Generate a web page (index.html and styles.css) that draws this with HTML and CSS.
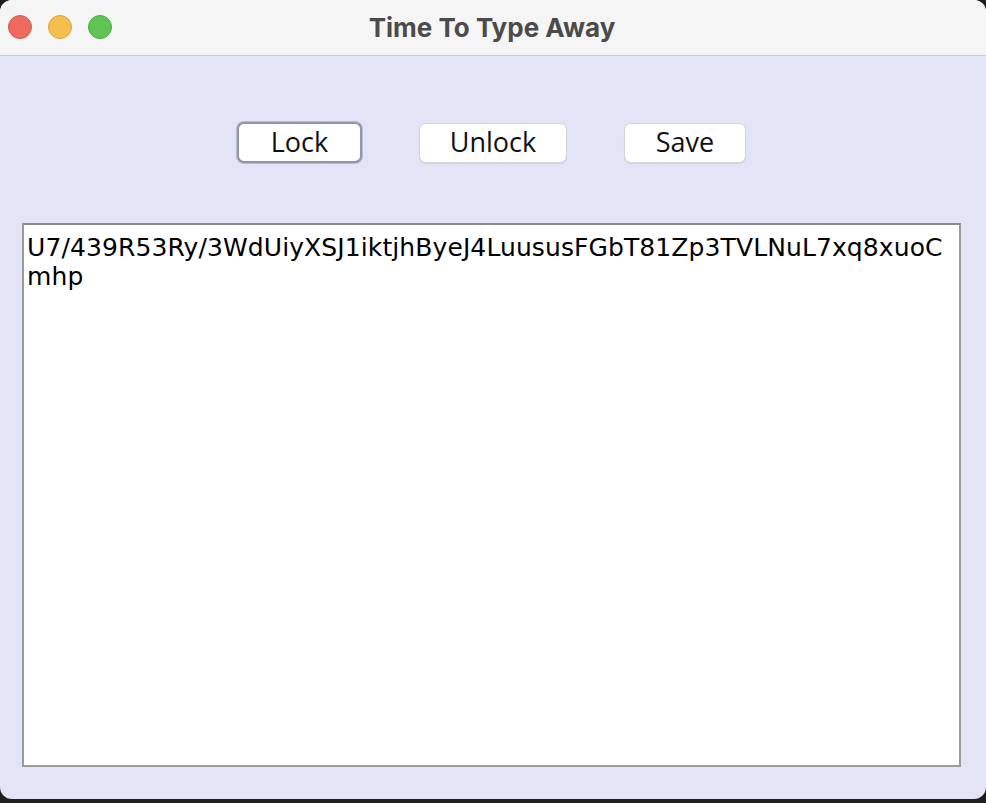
FILE: index.html
```html
<!DOCTYPE html>
<html>
<head>
<meta charset="utf-8">
<link rel="stylesheet" href="styles.css">
</head>
<body>
<div class="window">
  <div class="titlebar">
    <div class="lights">
      <span class="light red"></span>
      <span class="light yellow"></span>
      <span class="light green"></span>
    </div>
    <div class="title">Time To Type Away</div>
  </div>
  <div class="content">
    <div class="buttons">
      <button class="btn focused">Lock</button>
      <button class="btn">Unlock</button>
      <button class="btn">Save</button>
    </div>
    <div class="textarea"><span class="line">U7/439R53Ry/3WdUiyXSJ1iktjhByeJ4LuususFGbT81Zp3TVLNuL7xq8xuoC</span><span class="line">mhp</span></div>
  </div>
</div>
</body>
</html>
```

FILE: styles.css
```css
html, body {
  margin: 0;
  padding: 0;
  background: #1e1e1f;
}
body {
  width: 986px;
  height: 803px;
  overflow: hidden;
}
.window {
  width: 986px;
  height: 799px;
  border-radius: 12px;
  overflow: hidden;
  background: #e4e4f7;
  display: flex;
  flex-direction: column;
}
.titlebar {
  position: relative;
  height: 55px;
  background: #f5f5f5;
  border-bottom: 1px solid #c9c9cc;
  display: flex;
  align-items: center;
  justify-content: center;
  flex-shrink: 0;
}
.lights {
  position: absolute;
  left: 8px;
  top: 15px;
  display: flex;
  gap: 16px;
}
.light {
  width: 24px;
  height: 24px;
  border-radius: 50%;
  box-sizing: border-box;
}
.red { background: #ee6a5e; border: 1px solid #d45a4f; }
.yellow { background: #f5bf4f; border: 1px solid #d9a43f; }
.green { background: #5fc453; border: 1px solid #4fab45; }
.title {
  font-family: "Inter", "Open Sans", sans-serif;
  font-weight: 700;
  font-size: 26px;
  color: #4b4b4b;
  margin-top: 0;
  margin-left: -2px;
}
.content {
  flex: 1;
  display: flex;
  flex-direction: column;
  padding: 66px 25px 32px 22px;
}
.buttons {
  display: flex;
  justify-content: center;
  gap: 57px;
  height: 41px;
  align-items: center;
}
.btn {
  font-family: "Open Sans", sans-serif;
  font-size: 27px;
  color: #111;
  background: #fff;
  border: 1px solid #d3d3dc;
  border-radius: 7px;
  height: 40px;
  padding: 0 0 2px;
  box-shadow: 0 1px 1px rgba(0,0,0,0.08);
  line-height: 36px;
}
.btn:nth-child(1) { width: 125px; }
.btn:nth-child(2) { width: 148px; }
.btn:nth-child(3) { width: 122px; }
.btn.focused {
  height: 41px;
  border: 2px solid #8c96ad;
  box-shadow: 0 0 0 1px #b7bdd0;
}
.textarea {
  margin-top: 60px;
  flex: 1;
  background: #fff;
  border: 2px solid #9a9a9a;
  border-top-color: #8a8a8a;
  padding: 8px 3px 0;
  font-family: "DejaVu Sans", sans-serif;
  font-size: 25px;
  letter-spacing: 0.1px;
  line-height: 29px;
  color: #000;
  display: flex;
  flex-direction: column;
}
.line { white-space: pre; }
```
